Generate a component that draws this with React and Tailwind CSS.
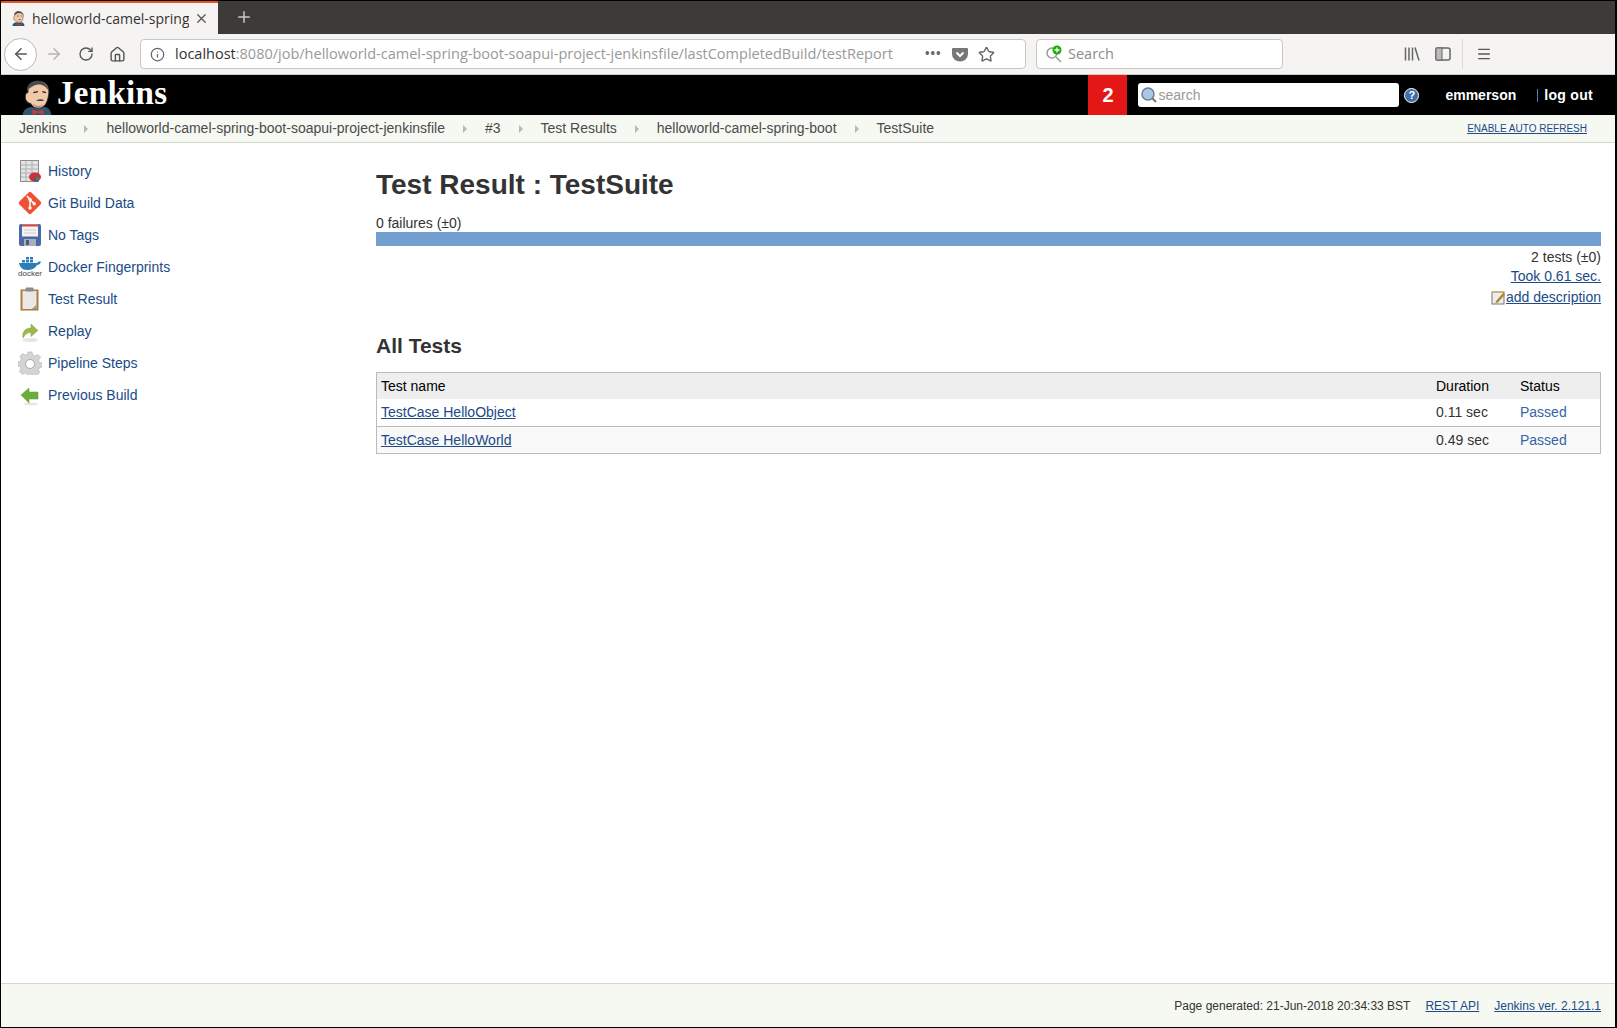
import { RotateCw, Home, ArrowLeft, ArrowRight, Info, Star, X, Plus, Menu } from "lucide-react";

const SANS = "font-['Liberation_Sans',Arial,sans-serif]";
const UI = "font-['Open_Sans','Noto_Sans',sans-serif]";

function ButlerHead({ size = 36 }) {
  return (
    <svg width={size} height={size} viewBox="0 0 36 40">
      <path d="M2 40c0-6 4-9 9-10l8 1 8-1c4 1 7 4 7 10z" fill="#33566f" />
      <path d="M8 8c2-6 10-8 16-6 6 2 8 8 7 14-1 7-3 13-9 15-5 1-9-1-11-5-3 0-6-3-6-7 0-3 1-5 3-5z" fill="#f0c9a8" stroke="#2a2a2a" strokeWidth="1" />
      <path d="M7 12C6 6 12 0 20 1c6 1 10 5 11 11-3-5-7-7-12-7-5 1-9 3-12 7z" fill="#4a4a4a" />
      <path d="M14 14l5-1M24 13l4 1" stroke="#222" strokeWidth="1.4" fill="none" />
      <path d="M17 23c3-2 7-2 9 0-3 0-6 1-9 0z" fill="#444" />
      <path d="M14 27c3 3 7 3 10 1" stroke="#a06a50" strokeWidth="1" fill="none" />
      <path d="M13 33l6 2 6-2v6l-6-3-6 3z" fill="#d33833" />
    </svg>
  );
}

function Arrow() {
  return <span className="w-0 h-0 border-y-[4px] border-y-transparent border-l-[4px] border-l-[#b8b8b8]" />;
}

function SideIcon({ name }) {
  if (name === "history") return (
    <svg width="24" height="24" viewBox="0 0 24 24">
      <rect x="2.5" y="1.5" width="18" height="21" fill="#e4e4e4" stroke="#8d8d8d" />
      <path d="M3 6h17M3 10h17M3 14h17M3 18h17M8 2v20M14 2v20" stroke="#b0b0b0" strokeWidth="1" />
      <ellipse cx="17" cy="18" rx="6" ry="4.5" fill="#c8323a" />
      <path d="M17 18l5 1c-1 3-3 3.5-5 3.5z" fill="#4d8c3f" />
      <path d="M17 18l-1 4.5c1 .3 3 .3 4-.5z" fill="#3d5ea8" />
    </svg>
  );
  if (name === "git") return (
    <svg width="26" height="26" viewBox="0 0 26 26">
      <rect x="4.5" y="4.5" width="17" height="17" rx="2" transform="rotate(45 13 13)" fill="#f05133" />
      <path d="M10 6l3 3.5M13 9.5v8M13 9.5l4 4" stroke="#fff" strokeWidth="1.5" fill="none" />
      <circle cx="13" cy="9.5" r="1.7" fill="#fff" /><circle cx="13" cy="18" r="1.7" fill="#fff" /><circle cx="17.2" cy="13.7" r="1.7" fill="#fff" />
    </svg>
  );
  if (name === "tags") return (
    <svg width="24" height="24" viewBox="0 0 24 24">
      <rect x="1" y="1" width="22" height="22" rx="2" fill="#4a69a8" />
      <rect x="4" y="1.5" width="16" height="12" fill="#f4f4f4" />
      <rect x="4" y="1.5" width="16" height="2" fill="#d8483e" />
      <path d="M6 7h12M6 10h12" stroke="#ccc" />
      <rect x="6" y="16" width="12" height="7" fill="#a9b0bc" />
      <rect x="8" y="17" width="3" height="5" fill="#4a5c80" />
    </svg>
  );
  if (name === "docker") return (
    <div className="flex flex-col items-center w-[24px]">
      <svg width="24" height="14" viewBox="0 0 24 14">
        <path d="M1 7h18c1-1 2-2 4-1-1 2-2 3-4 3-2 4-6 5-10 5-5 0-7-3-8-7z" fill="#2a7fb8" />
        <path d="M4 4h3v2.5H4zM8 4h3v2.5H8zM12 4h3v2.5h-3zM8 1h3v2.5H8zM12 1h3v2.5h-3z" fill="#2a7fb8" />
      </svg>
      <span className={`${SANS} text-[8px] leading-[8px] text-[#444]`}>docker</span>
    </div>
  );
  if (name === "clipboard") return (
    <svg width="24" height="24" viewBox="0 0 24 24">
      <rect x="2.5" y="2.5" width="18" height="21" fill="#ae7c3a" />
      <rect x="4.5" y="4" width="14" height="18" fill="#e8e8e8" />
      <path d="M14 22l4.5-4.5V22z" fill="#999" />
      <rect x="7.5" y="0.5" width="8" height="4" rx="1" fill="#8a8a8a" />
    </svg>
  );
  if (name === "replay") return (
    <svg width="24" height="24" viewBox="0 0 24 24">
      <ellipse cx="12" cy="21" rx="8" ry="2" fill="#e6e6e6" />
      <path d="M5 19c-1-6 2-10 8-10V5l7 6.5-7 6v-4c-4 0-6 2-8 5.5z" fill="#9cb84c" stroke="#86a03c" strokeWidth=".5" />
    </svg>
  );
  if (name === "gear") return (
    <svg width="24" height="24" viewBox="0 0 24 24">
      <path d="M10 1h4l.7 3 2.4 1 2.7-1.600 2.800 2.800L20.500 9l1 2.400 2.500.600v4l-2.500.700-1 2.400 1.300 2.500-2.800 2.800-2.600-1.400-2.400 1-.600 1H10l-.7-2-2.400-1-2.700 1.400L1.400 20.600 3 18l-1-2.400L0 15v-4l2.300-.600 1-2.400L1.900 5.300l2.800-2.700L7.300 4l2.100-1z" fill="#d4d4d4" stroke="#b4b4b4" strokeWidth=".6" />
      <circle cx="12" cy="13" r="4.500" fill="#fff" stroke="#aaa" />
    </svg>
  );
  return (
    <svg width="24" height="24" viewBox="0 0 24 24">
      <ellipse cx="13" cy="21" rx="7" ry="1.500" fill="#e6e6e6" />
      <path d="M3 12l8-7v4h9v7h-9v4z" fill="#6cae3e" stroke="#5a9a30" strokeWidth=".5" />
    </svg>
  );
}

const MENU = [
  { id: "history", label: "History" },
  { id: "git", label: "Git Build Data" },
  { id: "tags", label: "No Tags" },
  { id: "docker", label: "Docker Fingerprints" },
  { id: "clipboard", label: "Test Result" },
  { id: "replay", label: "Replay" },
  { id: "gear", label: "Pipeline Steps" },
  { id: "prev", label: "Previous Build" },
];

const CRUMBS = ["Jenkins", "helloworld-camel-spring-boot-soapui-project-jenkinsfile", "#3", "Test Results", "helloworld-camel-spring-boot", "TestSuite"];

const TESTS = [
  { name: "TestCase HelloObject", duration: "0.11 sec", bg: "bg-white" },
  { name: "TestCase HelloWorld", duration: "0.49 sec", bg: "bg-[#f9f9f9]" },
];

export default function App() {
  return (
    <div className={`${SANS} w-[1617px] h-[1028px] border border-black border-r-[2px] flex flex-col overflow-hidden bg-white text-[14px] text-[#333]`}>
      {/* tab strip */}
      <div className="h-[33px] bg-[#3c3b37] flex shrink-0">
        <div className={`${UI} w-[217px] bg-[#f5f4f2] border-t-[2px] border-t-[#e95420] flex items-center pl-[10px] pr-[9px] text-[14px] text-[#333]`}>
          <ButlerHead size={15} />
          <span className="ml-[6px] w-[158px] overflow-hidden whitespace-nowrap">helloworld-camel-spring</span>
          <X size={15} className="ml-[5px] text-[#555]" />
        </div>
        <Plus size={18} className="ml-[17px] mt-[7px] text-[#c8c8c4]" />
      </div>
      {/* toolbar */}
      <div className="h-[41px] bg-[#f5f4f2] border-b border-[#cfcdc9] flex items-center shrink-0 text-[#555]">
        <div className="ml-[3px] w-[33px] h-[33px] rounded-full bg-white border border-[#b9b8b5] flex items-center justify-center">
          <ArrowLeft size={18} />
        </div>
        <ArrowRight size={18} className="ml-[8px] text-[#b5b4b2]" />
        <RotateCw size={16} className="ml-[15px]" />
        <Home size={17} className="ml-[15px]" />
        <div className={`${UI} ml-[14px] w-[886px] h-[30px] bg-white border border-[#c8c7c4] rounded-[4px] flex items-center pl-[9px] pr-[6px] text-[14.5px]`}>
          <Info size={15} className="text-[#666] shrink-0" />
          <span className="ml-[10px] w-[730px] overflow-hidden whitespace-nowrap text-[#999]">
            <span className="text-[#333]">localhost</span>:8080/job/helloworld-camel-spring-boot-soapui-project-jenkinsfile/lastCompletedBuild/testReport
          </span>
          <span className="ml-[20px] tracking-[1px] text-[#666] text-[12px] font-bold">•••</span>
          <svg width="16" height="15" viewBox="0 0 16 15" className="ml-[10px]">
            <path d="M1 1h14a1 1 0 0 1 1 1v5a8 7.500 0 0 1-16 0V2a1 1 0 0 1 1-1z" fill="#777" />
            <path d="M4.500 5.500L8 9l3.500-3.500" stroke="#fff" strokeWidth="2" fill="none" />
          </svg>
          <Star size={17} className="ml-[10px] text-[#666]" />
        </div>
        <div className={`${UI} ml-[10px] w-[247px] h-[30px] bg-white border border-[#c8c7c4] rounded-[4px] flex items-center pl-[8px] text-[14.5px] text-[#8b8b8b] relative`}>
          <svg width="18" height="18" viewBox="0 0 18 18" className="shrink-0">
            <circle cx="7" cy="8" r="5" fill="none" stroke="#999" strokeWidth="1.500" />
            <path d="M11 12l5 5" stroke="#999" strokeWidth="1.500" />
            <circle cx="12" cy="5" r="4.500" fill="#15b000" />
            <path d="M12 2.500v5M9.500 5h5" stroke="#fff" strokeWidth="1.300" />
          </svg>
          <span className="ml-[5px]">Search</span>
        </div>
        <svg width="16" height="16" viewBox="0 0 16 16" className="ml-[121px] text-[#666]">
          <path d="M1.500 1.500v13M5 1.500v13M8.500 1.500v13M11 1.500l4 13" stroke="currentColor" strokeWidth="1.500" />
        </svg>
        <svg width="16" height="14" viewBox="0 0 16 14" className="ml-[15px]">
          <rect x="1" y="1" width="14" height="12" rx="2" fill="none" stroke="#666" strokeWidth="1.500" />
          <rect x="1" y="1" width="6" height="12" fill="#bbb" stroke="#666" strokeWidth="1" />
        </svg>
        <div className="ml-[11px] w-px h-[30px] bg-[#dcdad7]" />
        <Menu size={16} className="ml-[13px]" />
      </div>
      {/* jenkins header */}
      <div className="h-[40px] bg-black flex items-center text-white shrink-0">
        <div className="ml-[18px] mt-[2px] h-[40px] flex items-end overflow-hidden"><ButlerHead size={36} /></div>
        <span className="ml-[2px] font-['Liberation_Serif',serif] font-bold text-[33px] leading-none tracking-[0.3px] mb-[3px]">Jenkins</span>
        <div className="ml-auto w-[39px] h-full bg-[#e41717] flex items-center justify-center font-bold text-[20px] mr-[11px]">2</div>
        <div className="w-[261px] h-[24px] bg-white rounded-[3px] flex items-center pl-[3px] text-[14px] text-[#999]">
          <svg width="16" height="18" viewBox="0 0 16 18">
            <circle cx="7" cy="8" r="6" fill="#a9c8e8" stroke="#6d7f90" strokeWidth="1.500" />
            <path d="M11 12l4 4" stroke="#777" strokeWidth="2" />
          </svg>
          <span className="ml-[1px]">search</span>
        </div>
        <div className="ml-[5px] w-[15px] h-[15px] rounded-full bg-[#3e6da8] border border-white text-white text-[11px] font-bold flex items-center justify-center">?</div>
        <span className="ml-[26px] font-bold">emmerson</span>
        <span className="ml-[21px] w-px h-[13px] bg-[#5a7fa8]" />
        <span className="ml-[6px] mr-[22px] font-bold tracking-[0.3px]">log out</span>
      </div>
      {/* breadcrumbs */}
      <div className="h-[28px] bg-[#f6f8f2] border-b border-[#d3d7cf] flex items-center pl-[18px] pr-[28px] shrink-0 text-[#4b4b4b]">
        {CRUMBS.map((c, i) => (
          <div key={c} className="flex items-center">
            {i > 0 && <span className="mx-[18px] flex"><Arrow /></span>}
            <span>{c}</span>
          </div>
        ))}
        <a className="ml-auto text-[10px] text-[#204a87] underline">ENABLE AUTO REFRESH</a>
      </div>
      {/* main */}
      <div className="flex-1 flex min-h-0">
        <div className="w-[375px] pt-[12px] pl-[16px] shrink-0">
          {MENU.map(m => (
            <div key={m.id} className="h-[32px] flex items-center text-[#204a87]">
              <div className="w-[26px] flex justify-center"><SideIcon name={m.id} /></div>
              <span className="ml-[5px]">{m.label}</span>
            </div>
          ))}
        </div>
        <div className="flex-1 pr-[14px] pt-[25px]">
          <h1 className="text-[28px] leading-[34px] font-bold text-[#333]">Test Result : TestSuite</h1>
          <div className="mt-[13px] leading-[16px] text-[#333]">0 failures (±0)</div>
          <div className="h-[14px] bg-[#729fcf] mt-[1px]" />
          <div className="text-right mt-[2px] leading-[19px]">2 tests (±0)</div>
          <div className="text-right leading-[19px]"><a className="text-[#204a87] underline">Took 0.61 sec.</a></div>
          <div className="flex justify-end items-center mt-[1px] h-[20px]">
            <svg width="15" height="15" viewBox="0 0 15 15">
              <rect x="1" y="2" width="12" height="12" fill="#eee" stroke="#777" />
              <path d="M1 2h12" stroke="#e3b92a" strokeWidth="2" strokeDasharray="1 1" />
              <path d="M5 11l7-8 2 1.500-7 8-2.500.500z" fill="#b8862b" />
            </svg>
            <a className="text-[#204a87] underline">add description</a>
          </div>
          <h2 className="mt-[26px] text-[21px] leading-[26px] font-bold text-[#333]">All Tests</h2>
          <div className="mt-[13px] border border-[#bbb]">
            <div className="h-[26px] bg-[#eee] flex items-center text-black">
              <span className="flex-1 pl-[4px]">Test name</span>
              <span className="w-[84px]">Duration</span>
              <span className="w-[80px]">Status</span>
            </div>
            {TESTS.map((t, i) => (
              <div key={t.name} className={`h-[27px] flex items-center ${t.bg} ${i > 0 ? "border-t border-[#bbb]" : ""}`}>
                <span className="flex-1 pl-[4px]"><a className="text-[#204a87] underline">{t.name}</a></span>
                <span className="w-[84px]">{t.duration}</span>
                <span className="w-[80px] text-[#3465a4]">Passed</span>
              </div>
            ))}
          </div>
        </div>
      </div>
      {/* footer */}
      <div className="h-[44px] bg-[#f6f8f2] border-t border-[#d3d7cf] flex items-center justify-end pr-[14px] shrink-0 text-[12px] text-[#333]">
        <span>Page generated: 21-Jun-2018 20:34:33 BST</span>
        <a className="ml-[15px] text-[#204a87] underline">REST API</a>
        <a className="ml-[15px] text-[#204a87] underline">Jenkins ver. 2.121.1</a>
      </div>
    </div>
  );
}
